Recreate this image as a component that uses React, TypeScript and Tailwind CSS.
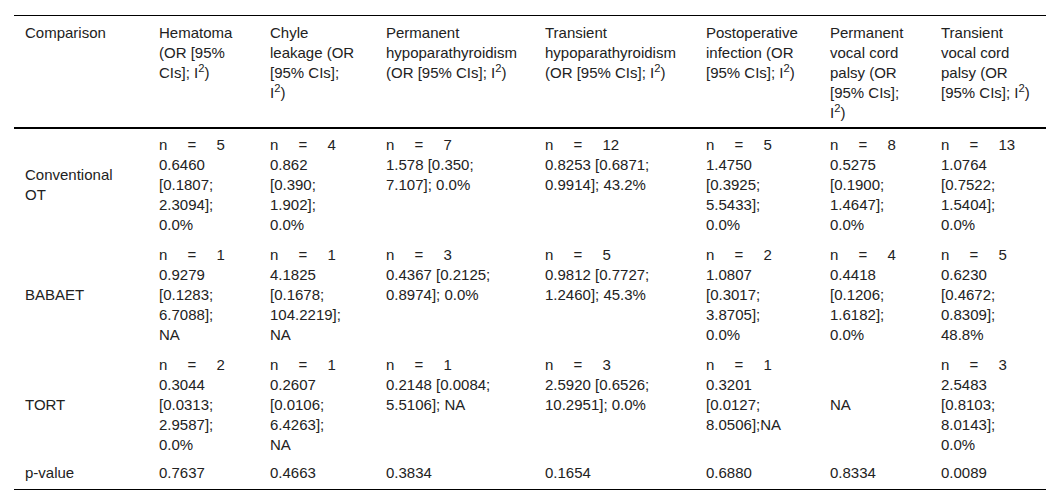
const I2 = () => (
  <>
    I<sup>2</sup>)
  </>
);

type Cell = { n?: string; lines: string[]; middle?: boolean };

const headers: React.ReactNode[][] = [
  [["Comparison"]],
  [["Hematoma"], ["(OR [95%"], ["CIs]; ", <I2 key="i" />]],
  [["Chyle"], ["leakage (OR"], ["[95% CIs];"], [<I2 key="i" />]],
  [["Permanent"], ["hypoparathyroidism"], ["(OR [95% CIs]; ", <I2 key="i" />]],
  [["Transient"], ["hypoparathyroidism"], ["(OR [95% CIs]; ", <I2 key="i" />]],
  [["Postoperative"], ["infection (OR"], ["[95% CIs]; ", <I2 key="i" />]],
  [["Permanent"], ["vocal cord"], ["palsy (OR"], ["[95% CIs];"], [<I2 key="i" />]],
  [["Transient"], ["vocal cord"], ["palsy (OR"], ["[95% CIs]; ", <I2 key="i" />]],
];

const rows: { label: string[]; cells: Cell[] }[] = [
  {
    label: ["Conventional", "OT"],
    cells: [
      { n: "5", lines: ["0.6460", "[0.1807;", "2.3094];", "0.0%"] },
      { n: "4", lines: ["0.862", "[0.390;", "1.902];", "0.0%"] },
      { n: "7", lines: ["1.578 [0.350;", "7.107]; 0.0%"] },
      { n: "12", lines: ["0.8253 [0.6871;", "0.9914]; 43.2%"] },
      { n: "5", lines: ["1.4750", "[0.3925;", "5.5433];", "0.0%"] },
      { n: "8", lines: ["0.5275", "[0.1900;", "1.4647];", "0.0%"] },
      { n: "13", lines: ["1.0764", "[0.7522;", "1.5404];", "0.0%"] },
    ],
  },
  {
    label: ["BABAET"],
    cells: [
      { n: "1", lines: ["0.9279", "[0.1283;", "6.7088];", "NA"] },
      { n: "1", lines: ["4.1825", "[0.1678;", "104.2219];", "NA"] },
      { n: "3", lines: ["0.4367 [0.2125;", "0.8974]; 0.0%"] },
      { n: "5", lines: ["0.9812 [0.7727;", "1.2460]; 45.3%"] },
      { n: "2", lines: ["1.0807", "[0.3017;", "3.8705];", "0.0%"] },
      { n: "4", lines: ["0.4418", "[0.1206;", "1.6182];", "0.0%"] },
      { n: "5", lines: ["0.6230", "[0.4672;", "0.8309];", "48.8%"] },
    ],
  },
  {
    label: ["TORT"],
    cells: [
      { n: "2", lines: ["0.3044", "[0.0313;", "2.9587];", "0.0%"] },
      { n: "1", lines: ["0.2607", "[0.0106;", "6.4263];", "NA"] },
      { n: "1", lines: ["0.2148 [0.0084;", "5.5106]; NA"] },
      { n: "3", lines: ["2.5920 [0.6526;", "10.2951]; 0.0%"] },
      { n: "1", lines: ["0.3201", "[0.0127;", "8.0506];NA"] },
      { lines: ["NA"], middle: true },
      { n: "3", lines: ["2.5483", "[0.8103;", "8.0143];", "0.0%"] },
    ],
  },
];

const pvalues = ["0.7637", "0.4663", "0.3834", "0.1654", "0.6880", "0.8334", "0.0089"];

const widths = ["w-[134px]", "w-[111px]", "w-[116px]", "w-[159px]", "w-[161px]", "w-[124px]", "w-[111px]", "w-[116px]"];

export default function App() {
  return (
    <div className="w-[1051px] h-[504px] bg-white pt-[15px] pl-[14px] font-['Liberation_Sans',Arial,sans-serif] text-[15px] leading-[20px] text-[#222]">
      <table className="table-fixed border-collapse w-[1032px]">
        <colgroup>
          {widths.map((w, i) => (
            <col key={i} className={w} />
          ))}
        </colgroup>
        <thead>
          <tr className="border-t border-black border-b-2">
            {headers.map((h, i) => (
              <th key={i} className="text-left font-normal align-top pl-[11px] pt-[7px] pb-[4px]">
                {h.map((line, j) => (
                  <div key={j} className="whitespace-nowrap">
                    {line}
                  </div>
                ))}
              </th>
            ))}
          </tr>
        </thead>
        <tbody>
          {rows.map((r, ri) => (
            <tr key={ri}>
              <td className={`align-middle pl-[11px] pb-[5px] ${ri === 0 ? "pt-[6px]" : "pt-[5px]"}`}>
                {r.label.map((l) => (
                  <div key={l}>{l}</div>
                ))}
              </td>
              {r.cells.map((c, ci) => (
                <td
                  key={ci}
                  className={`pl-[11px] pb-[5px] ${ri === 0 ? "pt-[6px]" : "pt-[5px]"} ${c.middle ? "align-middle" : "align-top"}`}
                >
                  {c.n && <div className="whitespace-nowrap [word-spacing:16px]">n = {c.n}</div>}
                  {c.lines.map((l, li) => (
                    <div key={li} className="whitespace-nowrap">
                      {l}
                    </div>
                  ))}
                </td>
              ))}
            </tr>
          ))}
          <tr className="border-b border-black">
            <td className="pl-[11px] pt-[3px] pb-[6px]">p-value</td>
            {pvalues.map((p) => (
              <td key={p} className="pl-[11px] pt-[3px] pb-[6px]">
                {p}
              </td>
            ))}
          </tr>
        </tbody>
      </table>
    </div>
  );
}
